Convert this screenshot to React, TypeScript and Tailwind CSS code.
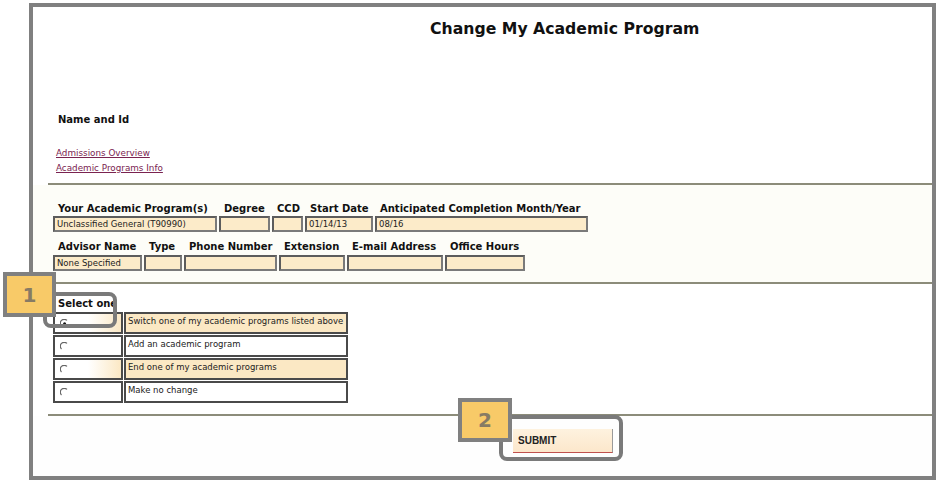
import React from "react";

const Radio = ({ checked }: { checked?: boolean }) => (
  <svg width="9" height="9" viewBox="0 0 9 9" className="block">
    <path d="M1.5 7 A3.6 3.6 0 0 1 7 1.4" fill="none" stroke="#666" strokeWidth="1.2" />
    {checked && <circle cx="4.6" cy="4.8" r="1.5" fill="#111" />}
  </svg>
);

export default function App() {
  const row1 = [
    { label: "Your Academic Program(s)", w: "w-[164px]", val: "Unclassified General (T90990)" },
    { label: "Degree", w: "w-[51px]", val: "" },
    { label: "CCD", w: "w-[31px]", val: "" },
    { label: "Start Date", w: "w-[68px]", val: "01/14/13" },
    { label: "Anticipated Completion Month/Year", w: "w-[213px]", val: "08/16" },
  ];
  const row2 = [
    { label: "Advisor Name", w: "w-[89px]", val: "None Specified" },
    { label: "Type", w: "w-[38px]", val: "" },
    { label: "Phone Number", w: "w-[93px]", val: "" },
    { label: "Extension", w: "w-[66px]", val: "" },
    { label: "E-mail Address", w: "w-[96px]", val: "" },
    { label: "Office Hours", w: "w-[80px]", val: "" },
  ];
  const options = [
    { text: "Switch one of my academic programs listed above", hl: true, checked: true },
    { text: "Add an academic program", hl: false },
    { text: "End one of my academic programs", hl: true },
    { text: "Make no change", hl: false },
  ];

  const Fields = ({ cols }: { cols: typeof row1 }) => (
    <div className="flex gap-[2px] h-[13px]">
      {cols.map((c) => (
        <div key={c.label} className={`${c.w} pl-[5px] text-[10px] leading-[13px] font-bold whitespace-nowrap text-[#111]`}>
          {c.label}
        </div>
      ))}
    </div>
  );

  const Boxes = ({ cols }: { cols: typeof row1 }) => (
    <div className="flex gap-[2px] h-[16px]">
      {cols.map((c) => (
        <div
          key={c.label}
          className={`${c.w} h-[16px] border-2 border-[#5c5c5c] border-r-[#7a7a7a] border-b-[#7a7a7a] bg-[#fcebc9] px-[2px] text-[8.5px] leading-[12px] whitespace-nowrap overflow-hidden text-[#222]`}
        >
          {c.val}
        </div>
      ))}
    </div>
  );

  return (
    <div className="relative w-[938px] h-[483px] bg-white overflow-hidden" style={{ fontFamily: '"DejaVu Sans", Verdana, sans-serif' }}>
      <div className="ml-[29px] mt-[3px] w-[907px] h-[477px] border-4 border-[#808080] flex flex-col">
        {/* Section A */}
        <div className="h-[176px] bg-white flex flex-col">
          <div className="mt-[12px] h-[20px] pl-[397px] text-[15.7px] leading-[20px] font-bold text-[#111] whitespace-nowrap">
            Change My Academic Program
          </div>
          <div className="mt-[74px] h-[14px] pl-[25px] text-[10px] leading-[14px] font-bold text-[#111]">Name and Id</div>
          <div className="mt-[19px] pl-[23px] flex flex-col text-[8.8px] leading-[15px] text-[#7a2350]">
            <span className="underline">Admissions Overview</span>
            <span className="underline">Academic Programs Info</span>
          </div>
        </div>
        <div className="ml-[15px] h-[2px] bg-[#8c8c7a]" />
        {/* Section B */}
        <div className="h-[97px] bg-[#fdfdf8] pl-[20px] flex flex-col">
          <div className="mt-[17px]">
            <Fields cols={row1} />
          </div>
          <div className="mt-[1px]">
            <Boxes cols={row1} />
          </div>
          <div className="mt-[8px]">
            <Fields cols={row2} />
          </div>
          <div className="mt-[2px]">
            <Boxes cols={row2} />
          </div>
        </div>
        <div className="ml-[15px] h-[2px] bg-[#8c8c7a]" />
        {/* Section C */}
        <div className="h-[130px] bg-white flex flex-col">
          <div className="mt-[13px] h-[13px] pl-[25px] text-[10px] leading-[13px] font-bold text-[#111]">Select one</div>
          <div className="mt-[2px] ml-[20px] flex flex-col gap-[1px]">
            {options.map((o) => (
              <div key={o.text} className="flex gap-[1px] h-[22px]">
                <div
                  className={`w-[70px] h-[22px] border-2 border-[#4a4a4a] pl-[5px] pt-[5px] ${
                    o.hl ? "bg-gradient-to-r from-white via-white to-[#fbe8c4]" : "bg-white"
                  }`}
                >
                  <Radio checked={o.checked} />
                </div>
                <div
                  className={`w-[224px] h-[22px] border-2 border-[#4a4a4a] pl-[2px] text-[8.5px] leading-[14px] whitespace-nowrap text-[#222] ${
                    o.hl ? "bg-[#fbe8c4]" : "bg-white"
                  }`}
                >
                  {o.text}
                </div>
              </div>
            ))}
          </div>
        </div>
        <div className="ml-[15px] h-[2px] bg-[#8c8c7a]" />
        {/* Section D */}
        <div className="flex-1 bg-[#fefefe]">
          <div
            className="mt-[13px] ml-[480px] w-[100px] h-[24px] bg-gradient-to-b from-[#fef2df] to-[#fce7cb] border-b border-b-[#c0504d] border-r border-r-[#9a9a9a] pl-[5px] text-[10px] leading-[24px] font-bold text-[#222]"
            style={{ fontFamily: '"Liberation Sans", Arial, sans-serif' }}
          >
            SUBMIT
          </div>
        </div>
      </div>

      {/* Callout 1 */}
      <div className="absolute left-[43px] top-[292px] w-[74px] h-[36px] border-4 border-[#7a7a7a] rounded-[8px]" />
      <div className="absolute left-[3px] top-[272px] w-[53px] h-[45px] border-4 border-[#808080] bg-[#f8ca68] flex items-center justify-center text-[20px] font-bold text-[#877b64]">
        1
      </div>
      {/* Callout 2 */}
      <div className="absolute left-[499px] top-[415px] w-[124px] h-[46px] border-4 border-[#7a7a7a] rounded-[8px]" />
      <div className="absolute left-[458px] top-[398px] w-[54px] h-[44px] border-4 border-[#808080] bg-[#f8ca68] flex items-center justify-center text-[20px] font-bold text-[#877b64]">
        2
      </div>
    </div>
  );
}
